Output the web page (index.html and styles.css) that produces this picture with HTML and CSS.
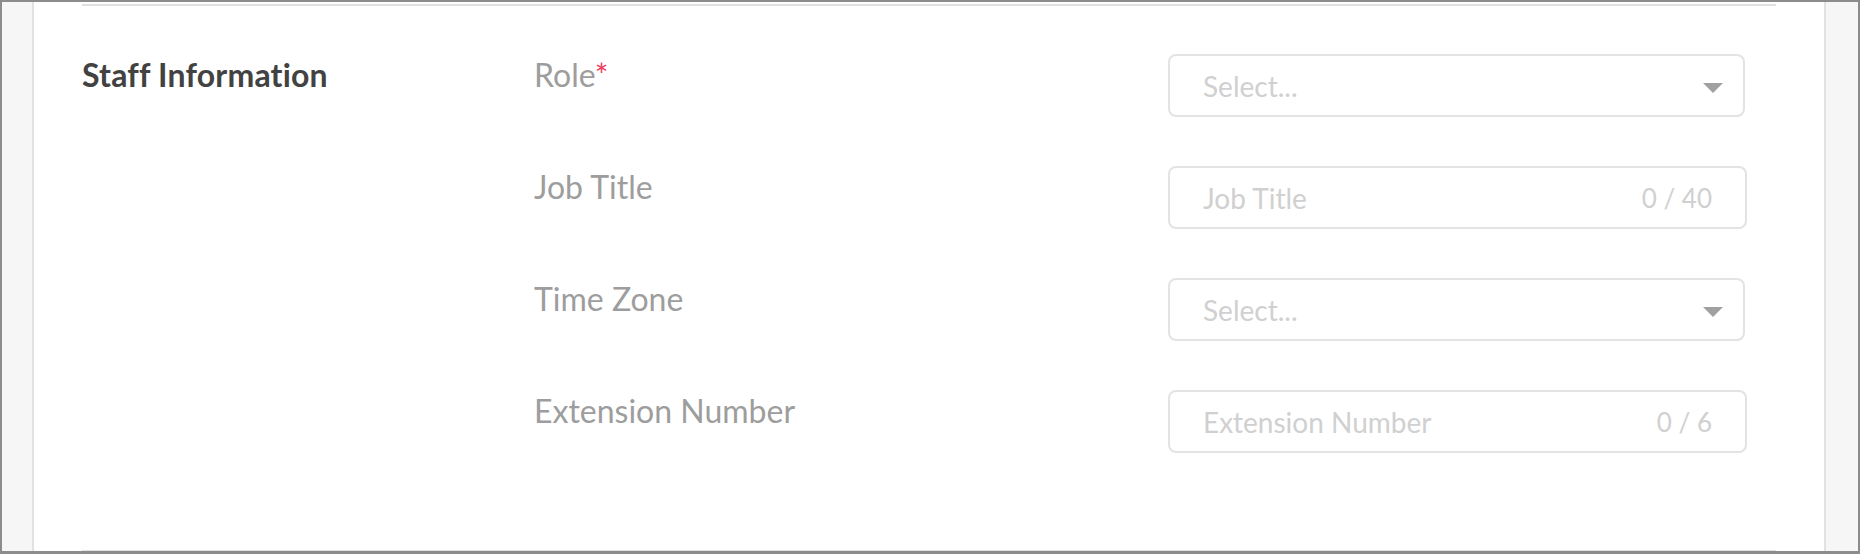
FILE: index.html
```html
<!DOCTYPE html>
<html lang="en">
<head>
  <meta charset="UTF-8">
  <title>Staff Information</title>
  <link rel="stylesheet" href="styles.css">
</head>
<body>
  <div class="frame">
    <div class="panel">
      <section class="form-section">
        <h3 class="section-title">Staff Information</h3>

        <div class="fields">
          <div class="field">
            <label class="field-label">Role<span class="required">*</span></label>
            <div class="select-box">
              <span class="placeholder">Select...</span>
              <span class="caret"></span>
            </div>
          </div>

          <div class="field">
            <label class="field-label">Job Title</label>
            <div class="text-box">
              <input type="text" placeholder="Job Title" maxlength="40">
              <span class="counter">0 / 40</span>
            </div>
          </div>

          <div class="field">
            <label class="field-label">Time Zone</label>
            <div class="select-box">
              <span class="placeholder">Select...</span>
              <span class="caret"></span>
            </div>
          </div>

          <div class="field">
            <label class="field-label">Extension Number</label>
            <div class="text-box">
              <input type="text" placeholder="Extension Number" maxlength="6">
              <span class="counter">0 / 6</span>
            </div>
          </div>
        </div>
      </section>
    </div>
  </div>
</body>
</html>
```

FILE: styles.css
```css
body {
  margin: 0;
  font-family: "Lato", "Open Sans", sans-serif;
  font-variant-ligatures: no-common-ligatures;
}
.frame {
  height: 554px;
  box-sizing: border-box;
  border: 2px solid #8c8c8c;
  border-bottom-width: 3px;
  background: #f6f6f6;
  padding: 0 32px 0 30px;
  overflow: hidden;
}
.panel {
  background: #fff;
  border-left: 2px solid #e2e2e2;
  border-right: 2px solid #e2e2e2;
  padding: 2px 48px 0;
  min-height: 100%;
}
.form-section {
  display: flex;
  border-top: 2px solid #e0e0e0;
  border-bottom: 2px solid #e0e0e0;
  padding: 48px 0 47px;
}
.section-title {
  width: 452px;
  margin: 0;
  font-size: 32px;
  line-height: 42px;
  font-weight: 700;
  color: #424242;
  letter-spacing: 0.2px;
}
.fields {
  flex: 1;
  padding-bottom: 1px;
}
.field {
  display: flex;
  margin-bottom: 49px;
}
.field-label {
  width: 634px;
  font-size: 32px;
  line-height: 42px;
  color: #9d9d9d;
}
.required {
  color: #ef3d5f;
}
.select-box,
.text-box {
  height: 63px;
  box-sizing: border-box;
  border: 2px solid #e3e3e3;
  border-radius: 8px;
  display: flex;
  align-items: center;
  justify-content: space-between;
  font-size: 28px;
  color: #d0d0d0;
}
.select-box {
  width: 577px;
  padding: 0 20px 0 33px;
}
.text-box {
  width: 579px;
  padding: 0 33px 0 33px;
}
.caret {
  margin-top: 5px;
  border-left: 10px solid transparent;
  border-right: 10px solid transparent;
  border-top: 10px solid #a0a0a0;
}
.text-box input {
  flex: 1;
  min-width: 0;
  border: none;
  outline: none;
  padding: 0;
  font: inherit;
  color: #555;
  background: transparent;
}
.text-box input::placeholder {
  color: #d0d0d0;
}
.counter {
  margin-left: 16px;
  font-size: 26px;
}
```
